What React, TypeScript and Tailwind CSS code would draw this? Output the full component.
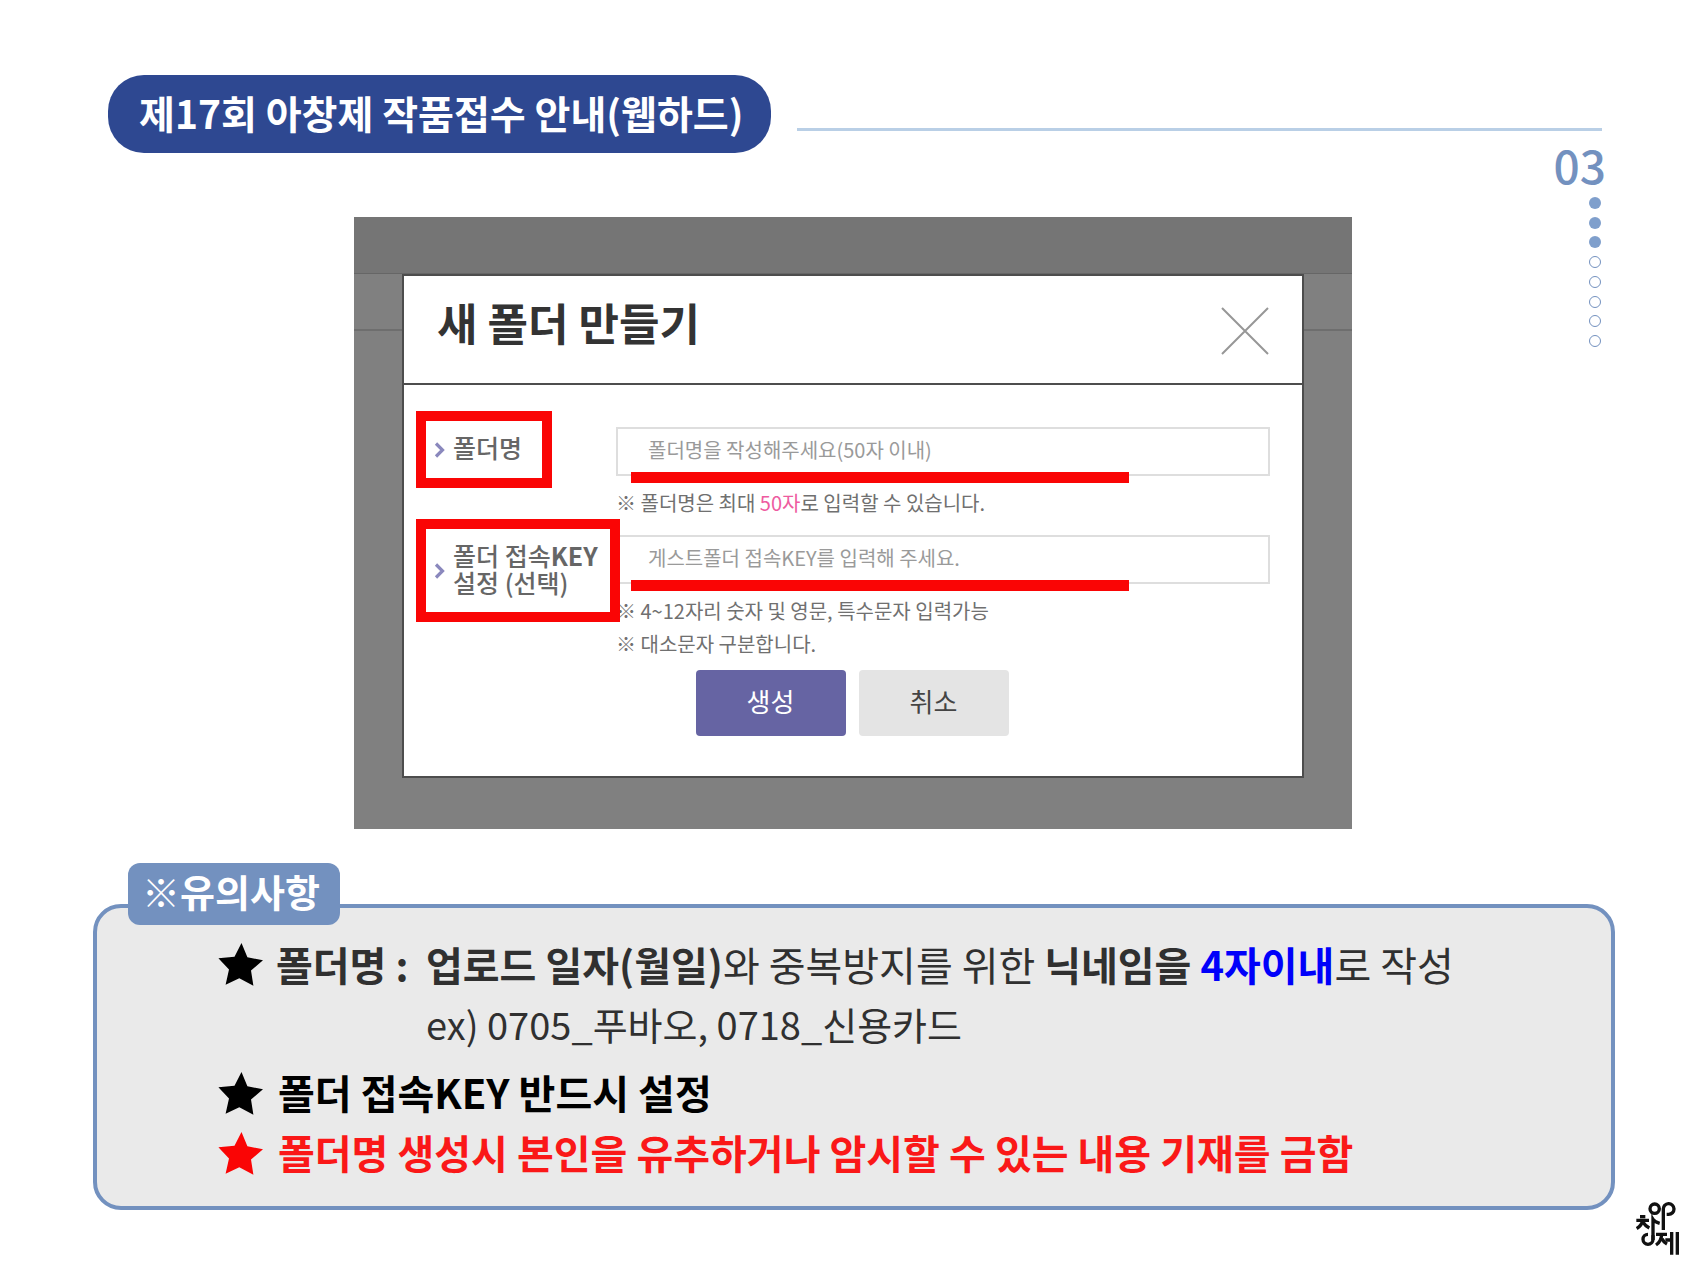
import { ReactNode } from "react";

const TOTAL_STEPS = 8;
const CURRENT_STEP = 3;

function PageHeader() {
  return (
    <header className="flex items-end pt-[75px] pr-[106px] pl-[108px]">
      <h1 className="flex h-[78px] items-center rounded-[36px] bg-[#2e4891] pr-7 pb-1 pl-[31px] text-[39px] leading-none font-bold text-white">
        제17회 아창제 작품접수 안내(웹하드)
      </h1>
      <div className="mb-[22px] ml-[26px] h-[3px] flex-1 bg-[#b9cfe6]" />
    </header>
  );
}

function StepIndicator() {
  return (
    <div className="flex flex-col items-end">
      <span className="text-[46px] leading-[22px] font-medium text-[#7391bf]">
        03
      </span>
      <ol className="mt-[22px] mr-[5px] flex h-[150px] flex-col justify-between">
        {Array.from({ length: TOTAL_STEPS }, (_, i) => (
          <li
            key={i}
            className={
              i < CURRENT_STEP
                ? "size-3 rounded-full bg-[#7f9fcc]"
                : "size-3 rounded-full border border-[#7391bf]"
            }
          />
        ))}
      </ol>
    </div>
  );
}

function CloseIcon() {
  return (
    <svg width="48" height="48" viewBox="0 0 48 48" aria-hidden="true">
      <path d="M1 1L47 47M47 1L1 47" stroke="#979797" strokeWidth="2" />
    </svg>
  );
}

function ChevronIcon() {
  return (
    <svg
      width="11"
      height="16"
      viewBox="0 0 11 16"
      fill="none"
      className="shrink-0"
      aria-hidden="true"
    >
      <path d="M2 1.5L8.5 8L2 14.5" stroke="#8a88bd" strokeWidth="3.2" />
    </svg>
  );
}

interface IFieldRowProps {
  id: string;
  label: ReactNode;
  labelClass: string;
  placeholder: string;
  children: ReactNode;
}

function FieldRow({
  id,
  label,
  labelClass,
  placeholder,
  children,
}: IFieldRowProps) {
  return (
    <div className="flex items-start">
      <div className="relative z-10 w-[200px] shrink-0">
        <label
          htmlFor={id}
          className={`flex items-center gap-2 border-[10px] border-[#fa0505] bg-white pl-2 text-[25px] leading-[27px] font-medium whitespace-nowrap text-[#666] ${labelClass}`}
        >
          <ChevronIcon />
          <span className="pb-1">{label}</span>
        </label>
      </div>
      <div className="relative mt-4 flex-1">
        <input
          id={id}
          type="text"
          placeholder={placeholder}
          className="block h-[49px] w-full border-2 border-[#dedede] bg-white px-[30px] pb-1 text-[20px] text-[#555] placeholder:text-[#9a9a9a]"
        />
        <div className="absolute top-[45px] left-[15px] h-[11px] w-[498px] bg-[#fa0505]" />
        <div className="mt-[10px] text-[20px] leading-[33px] text-[#707070]">
          {children}
        </div>
      </div>
    </div>
  );
}

function NewFolderDialog() {
  return (
    <section className="relative mt-16 bg-[#808080] px-12 pt-[57px] pb-[51px]">
      {/* dimmed page behind the dialog */}
      <div className="absolute inset-x-0 top-0">
        <div className="h-[57px] border-b border-[#666] bg-[#757575]" />
        <div className="h-[57px] border-b-2 border-[#6e6e6e]" />
      </div>

      <form className="relative border-2 border-[#4d4d4d] bg-white">
        <div className="flex h-[109px] items-start justify-between border-b-2 border-[#4d4d4d] pr-[33px] pl-[33px]">
          <h2 className="mt-6 text-[44px] leading-[44px] font-bold text-[#333]">
            새 폴더 만들기
          </h2>
          <button type="button" aria-label="닫기" className="mt-[31px]">
            <CloseIcon />
          </button>
        </div>

        <div className="pt-[26px] pr-8 pb-10 pl-3">
          <FieldRow
            id="folder-name"
            label="폴더명"
            labelClass="h-[77px] w-[136px]"
            placeholder="폴더명을 작성해주세요(50자 이내)"
          >
            <p>
              ※ 폴더명은 최대 <span className="text-[#ee5ba0]">50자</span>로
              입력할 수 있습니다.
            </p>
          </FieldRow>
          <FieldRow
            id="folder-key"
            label={
              <>
                폴더 접속<b>KEY</b>
                <br />
                설정 (선택)
              </>
            }
            labelClass="h-[103px] w-[204px]"
            placeholder="게스트폴더 접속KEY를 입력해 주세요."
          >
            <p>※ 4~12자리 숫자 및 영문, 특수문자 입력가능</p>
            <p>※ 대소문자 구분합니다.</p>
          </FieldRow>

          <div className="mt-[10px] flex justify-center gap-[13px] pl-[18px] text-[26px]">
            <button
              type="submit"
              className="h-[66px] w-[150px] rounded bg-[#6664a3] pb-[6px] text-white"
            >
              생성
            </button>
            <button
              type="button"
              className="h-[66px] w-[150px] rounded bg-[#e4e4e4] pb-[6px] text-[#444]"
            >
              취소
            </button>
          </div>
        </div>
      </form>
    </section>
  );
}

function StarIcon() {
  return (
    <svg
      width="46"
      height="44"
      viewBox="0 0 46 44"
      fill="currentColor"
      className="shrink-0"
      aria-hidden="true"
    >
      <path d="M23.5 0L29.4 14.2L45 17.3L33 27.5L35.4 42.8L21.3 35.3L7.6 41.8L11 26.5L0.4 15.2L16.5 13.8Z" />
    </svg>
  );
}

function Notice() {
  return (
    <section className="relative mx-[93px] mt-[75px] rounded-[28px] border-4 border-[#7391bf] bg-[#eaeaea] pt-6 pr-8 pb-6 pl-[121px]">
      <h2 className="absolute -top-[45px] left-[31px] flex h-[62px] items-center rounded-xl bg-[#7391bf] pr-5 pb-[6px] pl-[14px] text-[38px] leading-none font-bold text-white">
        ※유의사항
      </h2>
      <ul className="text-[40px] leading-[60px] font-bold">
        <li className="flex items-start gap-3 text-[#303030]">
          <span className="flex h-[64px] items-end pb-[9px] text-black">
            <StarIcon />
          </span>
          <span className="mt-[2px] w-[138px] shrink-0">폴더명 :</span>
          <div className="mt-[2px] font-normal">
            <p>
              <b>업로드 일자(월일)</b>와 중복방지를 위한 <b>닉네임을</b>{" "}
              <b className="text-[#0000fa]">4자이내</b>로 작성
            </p>
            <p className="text-[38px]">ex) 0705_푸바오, 0718_신용카드</p>
          </div>
        </li>
        <li className="mt-2 flex items-center gap-[14px] text-black">
          <span className="pt-1">
            <StarIcon />
          </span>
          폴더 접속KEY 반드시 설정
        </li>
        <li className="flex items-center gap-[14px] text-[#fa1818]">
          <span className="pt-1 text-[#fa0505]">
            <StarIcon />
          </span>
          폴더명 생성시 본인을 유추하거나 암시할 수 있는 내용 기재를 금함
        </li>
      </ul>
    </section>
  );
}

function Logo() {
  return (
    <svg
      width="44"
      height="54"
      viewBox="48 34 132 162"
      fill="none"
      stroke="#111"
      strokeWidth="10"
      role="img"
      aria-label="아창제"
    >
      <circle cx="104" cy="54" r="14" />
      <path d="M130 118V56A16 16 0 1 1 146 71H140" />
      <path d="M99 148V86Q104 94 119 98" />
      <path d="M99 134V146A15 15 0 1 1 84 131" />
      <path d="M60 78H76M49 89H87M68 89Q66 104 50 114M70 96Q76 106 88 112" />
      <path d="M108 131H141M125 131Q124 152 108 163M126 144Q130 154 141 160" />
      <path d="M136 148H154M155 124V192M172 124V192" />
    </svg>
  );
}

export default function App() {
  return (
    <div className="min-h-screen bg-white font-['Noto_Sans_CJK_KR',sans-serif]">
      <PageHeader />
      <main>
        <div className="grid grid-cols-[1fr_minmax(0,998px)_1fr] pr-[2px]">
          <div className="col-start-2">
            <NewFolderDialog />
          </div>
          <div className="pr-[100px]">
            <StepIndicator />
          </div>
        </div>
        <Notice />
      </main>
      <footer className="-mt-2 flex justify-end pr-7">
        <Logo />
      </footer>
    </div>
  );
}
